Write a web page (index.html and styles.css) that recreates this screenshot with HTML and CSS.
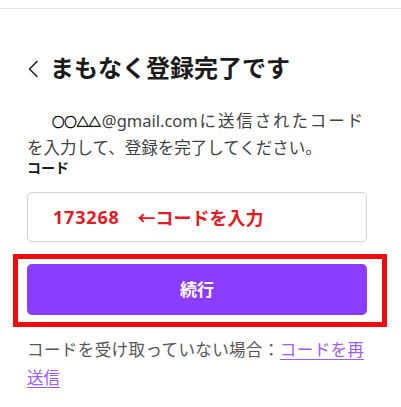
FILE: index.html
```html
<!DOCTYPE html>
<html lang="ja">
<head>
<meta charset="utf-8">
<link rel="stylesheet" href="styles.css">
</head>
<body>
<div class="topbar"></div>
<main class="content">
  <h1 class="title">
    <svg class="back" width="12" height="18" viewBox="0 0 12 18"><path d="M10 1.5 L2.5 9 L10 16.5" fill="none" stroke="#222" stroke-width="1.6" stroke-linecap="round" stroke-linejoin="round"/></svg>
    <span>まもなく登録完了です</span>
  </h1>
  <p class="desc">
    <span class="line first"><span class="mask">○○△△</span>@gmail.comに送信されたコード</span>
    <span class="line">を入力して、登録を完了してください。</span>
  </p>
  <div class="label">コード</div>
  <div class="field"><span class="digits">173268</span>　←コードを入力</div>
  <div class="btn-wrap">
    <button class="btn">続行</button>
    <div class="highlight"></div>
  </div>
  <p class="resend">
    <span class="line first">コードを受け取っていない場合：<a class="link" href="#">コードを再</a></span>
    <span class="line"><a class="link" href="#">送信</a></span>
  </p>
</main>
</body>
</html>
```
FILE: styles.css
```css
* { box-sizing: border-box; }
html, body { margin: 0; padding: 0; background: #fff; }
body {
  font-family: "Noto Sans", "Noto Sans CJK JP", sans-serif;
  color: #1a1a1a;
}
.topbar {
  height: 9px;
  border-bottom: 1px solid #e2e2e2;
}
.content {
  padding: 0 0 0 27px;
  width: 367px;
}
.title {
  margin: 43px 0 0;
  height: 32px;
  display: flex;
  align-items: center;
  gap: 11px;
  font-size: 24px;
  line-height: 32px;
  font-weight: 700;
  color: #1a1a1a;
}
.back { flex: none; margin-top: 1px; }
.desc {
  margin: 23px 0 0;
  font-size: 16.5px;
  color: #3f3f3f;
}
.line {
  display: block;
  height: 27px;
  line-height: 27px;
  white-space: nowrap;
  overflow: visible;
}
.line.first {
  text-align: justify;
  text-align-last: justify;
}
.desc .line.first { padding-left: 25px; margin-right: 4px; }
.mask {
  display: inline-block;
  font-family: "Noto Sans CJK JP", sans-serif;
  font-size: 12.5px;
  font-weight: 700;
  color: #000;
  -webkit-text-stroke: 0.4px #000;
  letter-spacing: -0.3px;
  margin-right: 1px;
}
.label {
  font-size: 14px;
  line-height: 14px;
  height: 14px;
  font-weight: 700;
  color: #1a1a1a;
}
.field {
  margin-top: 17px;
  height: 50px;
  border: 1px solid #cfcfcf;
  border-radius: 5px;
  padding-left: 25px;
  display: flex;
  align-items: center;
  font-size: 18px;
  font-weight: 700;
  color: #e41b23;
}
.digits { letter-spacing: 0.8px; }
.btn-wrap {
  position: relative;
  margin-top: 22px;
}
.btn {
  display: block;
  width: 100%;
  height: 51px;
  border: 0;
  border-radius: 5px;
  background: #8b3dff;
  color: #fff;
  font-family: "Noto Sans", "Noto Sans CJK JP", sans-serif;
  font-size: 17px;
  font-weight: 700;
  padding: 0 0 3px;
}
.highlight {
  position: absolute;
  left: -14px;
  top: -10px;
  width: 374px;
  height: 73px;
  border: 5px solid #f20a0a;
}
.resend {
  margin: 21px 0 0;
  font-size: 16.5px;
  color: #555;
}
.resend .line { height: 28px; line-height: 28px; }
.resend .line.first { margin-right: 3px; }
.link {
  color: #9b5cf6;
  text-decoration: underline;
  text-underline-offset: 3px;
}
```
